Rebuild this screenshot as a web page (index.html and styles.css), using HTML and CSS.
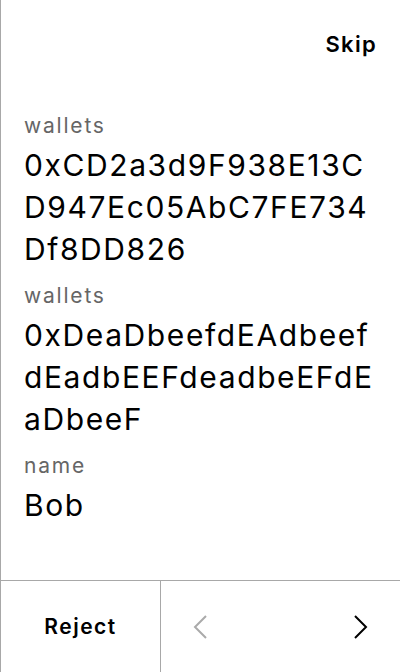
FILE: index.html
```html
<!DOCTYPE html>
<html>
<head>
<meta charset="utf-8">
<link rel="stylesheet" href="styles.css">
</head>
<body>
<div class="screen">
  <header class="top">
    <span class="skip">Skip</span>
  </header>
  <main class="fields">
    <div class="field">
      <div class="label">wallets</div>
      <div class="value">0xCD2a3d9F938E13CD947Ec05AbC7FE734Df8DD826</div>
    </div>
    <div class="field">
      <div class="label">wallets</div>
      <div class="value">0xDeaDbeefdEAdbeefdEadbEEFdeadbeEFdEaDbeeF</div>
    </div>
    <div class="field">
      <div class="label">name</div>
      <div class="value">Bob</div>
    </div>
  </main>
  <footer class="bar">
    <div class="reject">Reject</div>
    <div class="nav">
      <svg class="chev chev-off" viewBox="0 0 14 24" width="14" height="24"><path d="M13 1 L2 12 L13 23" fill="none" stroke="currentColor" stroke-width="2"/></svg>
      <svg class="chev" viewBox="0 0 14 24" width="14" height="24"><path d="M1 1 L12 12 L1 23" fill="none" stroke="currentColor" stroke-width="2"/></svg>
    </div>
  </footer>
</div>
</body>
</html>
```

FILE: styles.css
```css
* { box-sizing: border-box; }
html, body { margin: 0; padding: 0; background: #fff; }
body { font-family: Inter, "Noto Sans", sans-serif; color: #000; }
.screen {
  width: 400px;
  height: 672px;
  border-left: 1px solid #a8a8a8;
  display: flex;
  flex-direction: column;
}
.top {
  display: flex;
  justify-content: flex-end;
  padding: 32px 23px 0 24px;
  height: 114px;
}
.skip {
  font-size: 22px;
  line-height: 24px;
  font-weight: 600;
  letter-spacing: 1.3px;
}
.fields {
  flex: 1;
  display: flex;
  flex-direction: column;
  gap: 14px;
  padding: 0 24px 0 23px;
}
.label {
  font-size: 21px;
  line-height: 24px;
  letter-spacing: 1.8px;
  color: #666;
}
.value {
  font-size: 30px;
  line-height: 42px;
  letter-spacing: 1.6px;
  margin-top: 6px;
  word-break: break-all;
}
.bar {
  height: 92px;
  border-top: 1px solid #a8a8a8;
  display: flex;
}
.reject {
  width: 160px;
  border-right: 1px solid #a8a8a8;
  display: flex;
  align-items: center;
  justify-content: center;
  font-size: 21px;
  font-weight: 600;
  letter-spacing: 1.5px;
}
.nav {
  flex: 1;
  display: flex;
  align-items: center;
  justify-content: space-between;
  padding: 0 32px;
}
.chev { color: #000; display: block; }
.chev-off { color: #aaa; }
```
